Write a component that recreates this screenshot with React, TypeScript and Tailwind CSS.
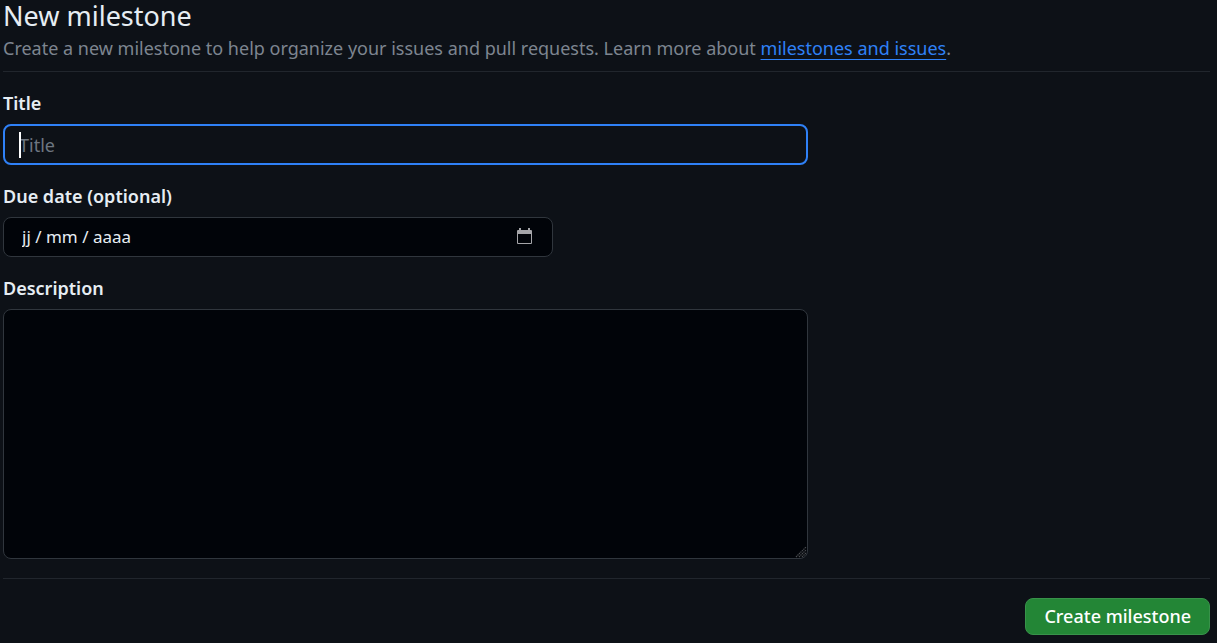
import { useState } from "react";

function CalendarIcon() {
  return (
    <svg width="16" height="16" viewBox="0 0 16 16" fill="none" aria-hidden="true">
      <path d="M3 0h2v2h7V0h2v2h1a1 1 0 0 1 1 1v12a1 1 0 0 1-1 1H2a1 1 0 0 1-1-1V3a1 1 0 0 1 1-1h1V0ZM2 6v8.500a.5.5 0 0 0 .5.5h12a.5.5 0 0 0 .5-.5V6H2Z" fill="#a5a5a9" fillRule="evenodd" />
    </svg>
  );
}

function ResizeGrip() {
  return (
    <svg width="12" height="12" viewBox="0 0 12 12" className="pointer-events-none absolute right-px bottom-px" aria-hidden="true">
      <path d="M1 11 11 1M4 11 11 4M7 11 11 7" stroke="#4b4d51" strokeWidth="1.2" strokeDasharray="1.4 0.7" />
    </svg>
  );
}

export default function App() {
  const [title, setTitle] = useState("");
  return (
    <main className="min-h-screen bg-[#0d1117] pr-[7px] pb-2 pl-[3px] font-['Noto_Sans',sans-serif] text-lg text-[#e6edf3]">
      <header className="border-b border-[#21262d] pb-[9px]">
        <h1 className="text-[27px] leading-8 font-normal">New milestone</h1>
        <p className="pt-[3px] leading-[27px] text-[#7d8590]">
          Create a new milestone to help organize your issues and pull requests. Learn more about{" "}
          <a href="#milestones" className="text-[#2f81f7] underline decoration-1 underline-offset-4">milestones and issues</a>.
        </p>
      </header>
      <form onSubmit={(e) => e.preventDefault()}>
        <div className="flex flex-col gap-[18px] border-b border-[#21262d] pt-[18px] pb-[19px]">
          <div className="flex w-2/3 flex-col gap-[7px]">
            <label htmlFor="title" className="leading-[27px] font-semibold">Title</label>
            <div className="relative flex h-[41px] items-center">
              <input
                id="title"
                type="text"
                placeholder="Title"
                value={title}
                onChange={(e) => setTitle(e.target.value)}
                className="h-full w-full rounded-lg border-2 border-[#2f81f7] bg-[#0d1117] px-[14px] outline-none placeholder:text-[#6e7681]"
              />
              {title === "" && <span className="pointer-events-none absolute left-4 h-[26px] w-0.5 bg-white" />}
            </div>
          </div>
          <div className="flex flex-col gap-[7px]">
            <label htmlFor="due" className="leading-[27px] font-semibold">Due date (optional)</label>
            <div className="flex h-10 w-[550px] max-w-full items-center rounded-lg border border-[#30363d] bg-[#010409] pr-5 pl-[18px]">
              <input id="due" type="text" placeholder="jj / mm / aaaa" className="min-w-0 flex-1 bg-transparent text-[17px] outline-none placeholder:text-[#e6edf3]" />
              <button type="button" aria-label="Choose date" className="pb-0.5"><CalendarIcon /></button>
            </div>
          </div>
          <div className="flex w-2/3 flex-col gap-[7px]">
            <label htmlFor="description" className="leading-[27px] font-semibold">Description</label>
            <div className="relative flex">
              <textarea id="description" className="h-[250px] w-full resize-none rounded-lg border border-[#30363d] bg-[#010409] px-4 py-2 outline-none" />
              <ResizeGrip />
            </div>
          </div>
        </div>
        <div className="flex justify-end pt-[19px]">
          <button type="submit" className="h-[37px] rounded-lg border border-[#38924a] bg-[#238636] px-[18px] pb-0.5 font-medium text-white">
            Create milestone
          </button>
        </div>
      </form>
    </main>
  );
}
